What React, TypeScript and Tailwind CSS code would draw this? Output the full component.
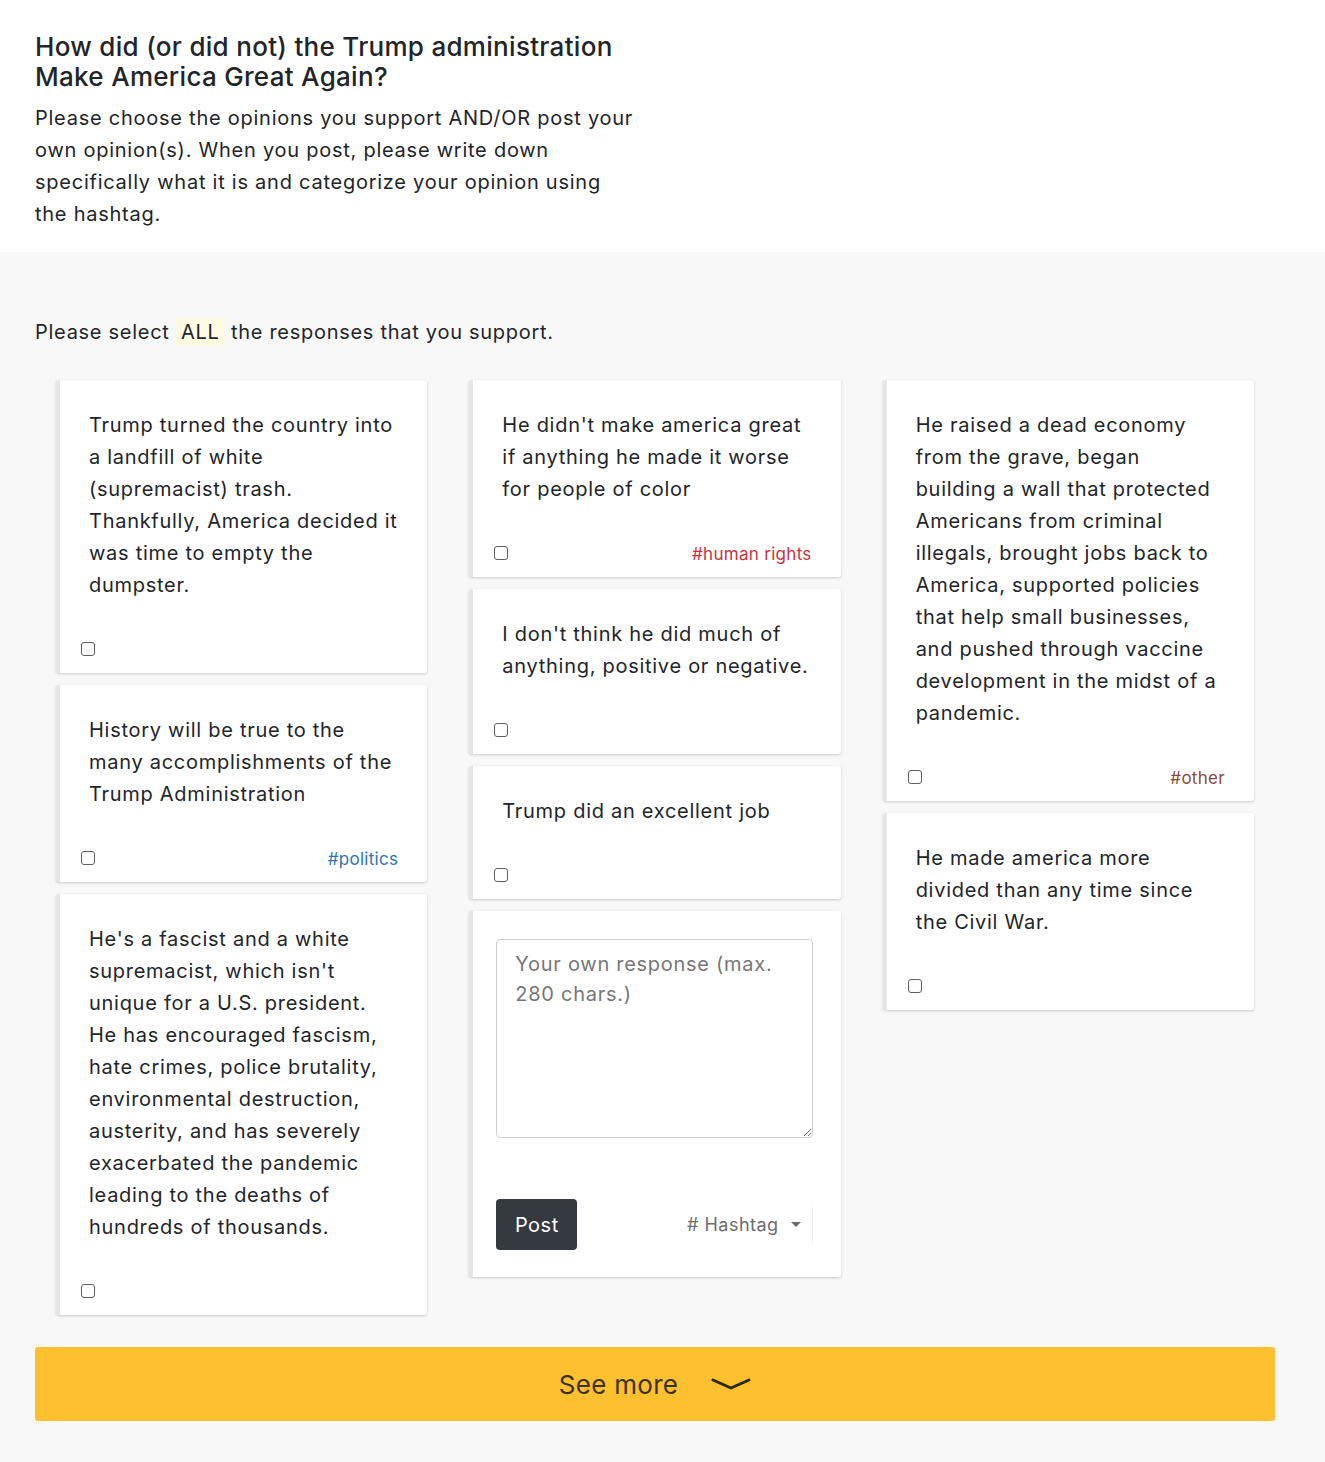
import { ReactNode } from 'react'

type Tag = { label: string; color: string }

interface Opinion {
  text: string
  tag?: Tag
}

const politics: Tag = { label: '#politics', color: 'text-[#2a75b3]' }
const humanRights: Tag = { label: '#human rights', color: 'text-[#c9323f]' }
const other: Tag = { label: '#other', color: 'text-[#8a4a3c]' }

const columnOne: Opinion[] = [
  {
    text: 'Trump turned the country into a landfill of white (supremacist) trash. Thankfully, America decided it was time to empty the dumpster.',
  },
  { text: 'History will be true to the many accomplishments of the Trump Administration', tag: politics },
  {
    text: "He's a fascist and a white supremacist, which isn't unique for a U.S. president. He has encouraged fascism, hate crimes, police brutality, environmental destruction, austerity, and has severely exacerbated the pandemic leading to the deaths of hundreds of thousands.",
  },
]

const columnTwo: Opinion[] = [
  { text: "He didn't make america great if anything he made it worse for people of color", tag: humanRights },
  { text: "I don't think he did much of anything, positive or negative." },
  { text: 'Trump did an excellent job' },
]

const columnThree: Opinion[] = [
  {
    text: 'He raised a dead economy from the grave, began building a wall that protected Americans from criminal illegals, brought jobs back to America, supported policies that help small businesses, and pushed through vaccine development in the midst of a pandemic.',
    tag: other,
  },
  { text: 'He made america more divided than any time since the Civil War.' },
]

function Card({ children }: { children: ReactNode }) {
  return (
    <div className="rounded-[3px] border-l-4 border-l-[#e6e6e6] bg-white shadow-[0_1px_3px_rgba(0,0,0,0.18)]">
      {children}
    </div>
  )
}

function Checkbox() {
  return <span className="block size-[14px] rounded-[3px] border-[1.5px] border-[#5f5f5f] bg-white" />
}

function OpinionCard({ opinion }: { opinion: Opinion }) {
  return (
    <Card>
      <div className="px-[21px] pt-[29px] pb-[10px]">
        <p className="px-[8px] text-[20px] leading-[32px] tracking-[0.72px] text-[#212529]">{opinion.text}</p>
        <div className="mt-[34px] flex h-[28px] items-center justify-between">
          <Checkbox />
          {opinion.tag && (
            <span className={`mt-[3px] pr-2 text-[17px] tracking-[0.3px] ${opinion.tag.color}`}>
              {opinion.tag.label}
            </span>
          )}
        </div>
      </div>
    </Card>
  )
}

function ResponseForm() {
  return (
    <Card>
      <div className="pt-[28px] pr-[28px] pb-[27px] pl-[23px]">
        <textarea
          placeholder="Your own response (max. 280 chars.)"
          className="block h-[199px] w-full resize-y rounded-[4px] border border-[#cfcfcf] px-[18px] py-[9px] text-[20px] leading-[30px] tracking-[0.72px] text-[#212529] placeholder:text-[#777]"
        />
        <div className="mt-[61px] flex items-center justify-between">
          <button className="h-[51px] w-[81px] rounded-[4px] bg-[#343a40] text-[20px] tracking-[0.5px] text-white">
            Post
          </button>
          <button className="flex h-[36px] items-center gap-3 border-r border-r-[#eee] pr-[11px] text-[18px] tracking-[0.5px] text-[#6c6c6c]">
            # Hashtag
            <span className="h-0 w-0 border-x-[5px] border-t-[5px] border-x-transparent border-t-[#6c6c6c]" />
          </button>
        </div>
      </div>
    </Card>
  )
}

export default function App() {
  return (
    <div className="min-h-[1462px] bg-[#f8f8f8] font-['Inter',sans-serif] text-[#212529]">
      <header className="bg-white px-[35px] pt-[32px] pb-[22px]">
        <h1 className="text-[26px] leading-[30px] font-medium tracking-[0.3px]">
          How did (or did not) the Trump administration
          <br />
          Make America Great Again?
        </h1>
        <p className="mt-[10px] w-[600px] text-[20px] leading-[32px] tracking-[0.75px]">
          Please choose the opinions you support AND/OR post your own opinion(s). When you post, please write down
          specifically what it is and categorize your opinion using the hashtag.
        </p>
      </header>

      <main className="pt-[64px] pr-[50px] pb-[42px] pl-[35px]">
        <p className="text-[20px] leading-[32px] tracking-[0.72px]">
          Please select <span className="bg-[#fffbe3] px-[5px] py-[2px]">ALL</span> the responses that you support.
        </p>

        <div className="mt-[32px] grid grid-cols-3 gap-x-[42px] px-[21px]">
          <div className="flex flex-col gap-3">
            {columnOne.map((o) => (
              <OpinionCard key={o.text} opinion={o} />
            ))}
          </div>
          <div className="flex flex-col gap-3">
            {columnTwo.map((o) => (
              <OpinionCard key={o.text} opinion={o} />
            ))}
            <ResponseForm />
          </div>
          <div className="flex flex-col gap-3">
            {columnThree.map((o) => (
              <OpinionCard key={o.text} opinion={o} />
            ))}
          </div>
        </div>

        <button className="mt-[32px] flex h-[74px] w-full items-center justify-center gap-[33px] rounded-[3px] bg-[#fdc02f] text-[26px] tracking-[0.3px] text-[#3b3120]">
          See more
          <svg width="40" height="14" viewBox="0 0 40 14" fill="none">
            <path d="M2 3 L20 11 L38 3" stroke="#2e2616" strokeWidth="3" strokeLinecap="round" strokeLinejoin="round" />
          </svg>
        </button>
      </main>
    </div>
  )
}
